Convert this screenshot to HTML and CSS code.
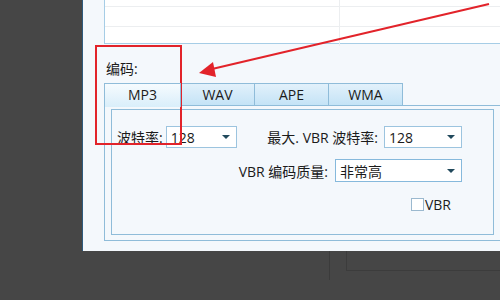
FILE: index.html
```html
<!DOCTYPE html>
<html lang="zh-CN">
<head>
  <meta charset="UTF-8">
  <title>编码设置</title>
  <link rel="stylesheet" href="styles.css">
</head>
<body>
  <div class="screen">
    <div class="window">
      <div class="list">
        <div class="list-row short"><div class="cell wide"></div><div class="cell"></div></div>
        <div class="list-row"><div class="cell wide"></div><div class="cell"></div></div>
        <div class="list-row"><div class="cell wide"></div><div class="cell"></div></div>
      </div>

      <div class="label">编码:</div>

      <div class="tabs">
        <div class="tab active">MP3</div>
        <div class="tab">WAV</div>
        <div class="tab">APE</div>
        <div class="tab">WMA</div>
      </div>

      <div class="tab-body">
        <div class="group">
          <div class="row">
            <span class="text">波特率:</span>
            <div class="select s-small"><span>128</span><i class="arrow"></i></div>
            <span class="text push">最大. VBR 波特率:</span>
            <div class="select s-mid"><span>128</span><i class="arrow"></i></div>
          </div>
          <div class="row right">
            <span class="text">VBR 编码质量:</span>
            <div class="select s-wide"><span>非常高</span><i class="arrow"></i></div>
          </div>
          <div class="row right check-row">
            <span class="checkbox"></span><span class="text">VBR</span>
          </div>
        </div>
      </div>
    </div>

    <div class="under">
      <div class="edge"></div>
      <div class="box"></div>
    </div>

    <!-- red annotation drawn over the screenshot -->
    <svg class="annot" width="500" height="300" viewBox="0 0 500 300">
      <rect x="96" y="46" width="85" height="98" fill="none" stroke="#e2232a" stroke-width="2"/>
      <line x1="489" y1="4" x2="212" y2="69" stroke="#e2232a" stroke-width="2"/>
      <polygon points="199,73 213,62 216,77" fill="#e2232a"/>
    </svg>
  </div>
</body>
</html>
```

FILE: styles.css
```css
body {
  margin: 0;
  background: #464646;
  font-family: "Open Sans", "Noto Sans CJK SC", sans-serif;
  font-size: 14px;
  color: #1b1b1b;
}

.screen {
  position: relative;
  width: 500px;
  height: 300px;
  overflow: hidden;
}

.window {
  margin-left: 82px;
  height: 251px;
  border-left: 1px solid #2f5b7e;
  background: #f4f8fc;
  padding-left: 21px;
  overflow: hidden;
}

.list {
  width: 420px;
  height: 43px;
  background: #fff;
  border-left: 1px solid #a6cde6;
  border-bottom: 1px solid #a6cde6;
}

.list-row {
  display: flex;
  height: 19px;
  border-bottom: 1px solid #eceef0;
}

.list-row.short {
  height: 6px;
}

.list-row:last-child {
  border-bottom: none;
}

.cell {
  flex: 1;
}

.cell.wide {
  flex: none;
  width: 234px;
  border-right: 1px solid #eceef0;
}

.label {
  margin-top: 16px;
  height: 18px;
  line-height: 18px;
  padding-left: 2px;
}

.tabs {
  display: flex;
  margin-top: 5px;
  height: 23px;
}

.tab {
  box-sizing: border-box;
  width: 74px;
  height: 23px;
  line-height: 21px;
  text-align: center;
  border: 1px solid #8fbcd9;
  border-left: none;
  background: linear-gradient(#e2f1fb, #c4e3f6);
}

.tab.active {
  width: 77px;
  border-left: 1px solid #8fbcd9;
  border-bottom: none;
  height: 24px;
  line-height: 22px;
  background: linear-gradient(#f6fbfe, #d9eefa);
  position: relative;
  z-index: 1;
}

.tab-body {
  width: 410px;
  height: 136px;
  margin-top: -1px;
  border: 1px solid #8fbcd9;
  padding: 3px 0 6px 6px;
  box-sizing: border-box;
}

.group {
  width: 383px;
  height: 126px;
  border: 1px solid #8fbcd9;
  padding: 16px 31px 0 5px;
  box-sizing: border-box;
}

.row {
  display: flex;
  align-items: center;
  height: 22px;
}

.row.right {
  justify-content: flex-end;
  margin-top: 11px;
  height: 23px;
}

.text {
  white-space: nowrap;
}

.push {
  margin-left: auto;
  margin-right: 6px;
}

.row.right .text {
  margin-right: 7px;
}

.select {
  display: flex;
  align-items: center;
  height: 22px;
  box-sizing: border-box;
  border: 1px solid #9cc4df;
  background: #fff;
  padding: 0 6px 0 4px;
}

.select span {
  flex: 1;
}

.s-small {
  width: 71px;
  margin-left: 3px;
}

.s-mid {
  width: 78px;
}

.s-wide {
  width: 127px;
  height: 23px;
  border-color: #86b9dc;
}

.arrow {
  width: 0;
  height: 0;
  border-left: 4px solid transparent;
  border-right: 4px solid transparent;
  border-top: 4px solid #21495c;
}

.check-row {
  margin-top: 7px;
  padding-right: 4px;
}

.checkbox {
  width: 11px;
  height: 11px;
  border: 1px solid #9bb9cf;
  background: #fff;
  margin-right: 1px;
}

.check-row .text {
  margin-right: 0;
}

.under {
  display: flex;
  margin-left: 329px;
  height: 30px;
}

.edge {
  width: 1px;
  height: 29px;
  background: #3b3b3b;
}

.box {
  flex: 1;
  margin-left: 16px;
  height: 19px;
  border-left: 1px solid #3c3c3c;
  border-bottom: 1px solid #3c3c3c;
}

.annot {
  position: absolute;
  left: 0;
  top: 0;
  pointer-events: none;
}
```
